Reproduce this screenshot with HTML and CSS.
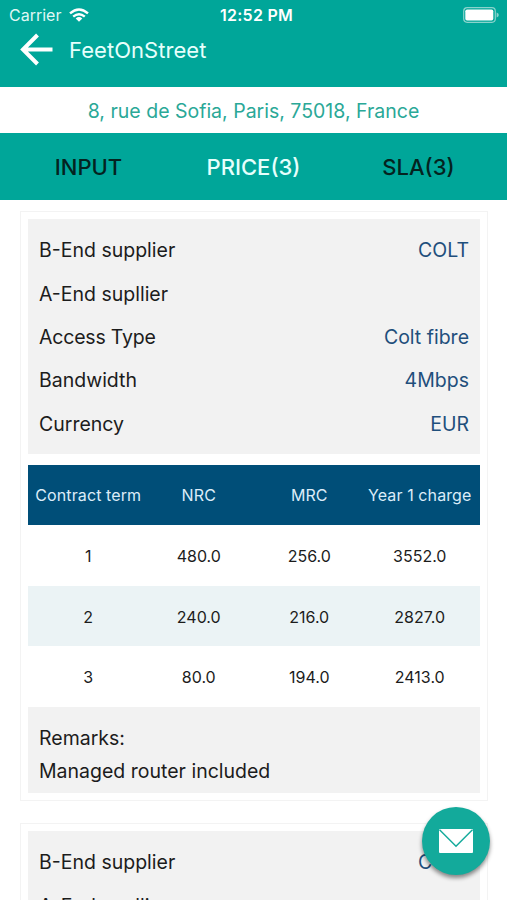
FILE: index.html
```html
<!DOCTYPE html>
<html lang="en">
<head>
<meta charset="utf-8">
<title>FeetOnStreet</title>
<link rel="stylesheet" href="styles.css">
</head>
<body>
<div class="screen">
  <header class="header">
    <div class="status">
      <div class="carrier"><span>Carrier</span>
        <svg class="wifi" viewBox="0 0 20 14" width="20" height="14"><g fill="none" stroke="#fff" stroke-width="2.4"><path d="M1 5.4Q10-2.4 19 5.4"/><path d="M4.2 8.7Q10 3.7 15.8 8.7"/></g><path d="M6.7 10.4Q10 7.6 13.3 10.4L10 13.7z" fill="#fff"/></svg>
      </div>
      <div class="clock">12:52 PM</div>
      <svg class="battery" viewBox="0 0 36 16" width="36" height="16"><rect x=".7" y=".7" width="31.6" height="14.6" rx="3.5" fill="none" stroke="#8ad3cc" stroke-width="1.2"/><rect x="2.3" y="2.5" width="28" height="11" rx="1.8" fill="#fff"/><path d="M33.6 5.5q2.2.6 2.2 2.5t-2.2 2.5z" fill="#8ad3cc"/></svg>
    </div>
    <div class="nav">
      <svg class="back" viewBox="0 0 34 34" width="34" height="34"><path d="M33.5 16.5H4M18.5 2L4 16.5 18.500 31" fill="none" stroke="#fff" stroke-width="4"/></svg>
      <h1 class="title">FeetOnStreet</h1>
    </div>
  </header>
  <div class="address"><span>8, rue de Sofia, Paris, 75018, France</span></div>
  <nav class="tabs">
    <span class="tab">INPUT</span><span class="tab active">PRICE(3)</span><span class="tab">SLA(3)</span>
  </nav>
  <main class="list">
    <section class="card">
      <dl class="info">
        <div class="row"><dt>B-End supplier</dt><dd>COLT</dd></div>
        <div class="row second"><dt>A-End supllier</dt><dd></dd></div>
        <div class="row"><dt class="tight">Access Type</dt><dd>Colt fibre</dd></div>
        <div class="row"><dt>Bandwidth</dt><dd>4Mbps</dd></div>
        <div class="row"><dt>Currency</dt><dd>EUR</dd></div>
      </dl>
      <div class="table">
        <div class="line head"><span>Contract term</span><span>NRC</span><span>MRC</span><span>Year 1 charge</span></div>
        <div class="line"><span>1</span><span>480.0</span><span>256.0</span><span>3552.0</span></div>
        <div class="line alt"><span>2</span><span>240.0</span><span>216.0</span><span>2827.0</span></div>
        <div class="line"><span>3</span><span>80.0</span><span>194.0</span><span>2413.0</span></div>
      </div>
      <div class="remarks"><p>Remarks:</p><p>Managed router included</p></div>
    </section>
    <section class="card">
      <dl class="info">
        <div class="row"><dt>B-End supplier</dt><dd>COLT</dd></div>
        <div class="row second"><dt>A-End supllier</dt><dd></dd></div>
      </dl>
    </section>
  </main>
  <div class="fab">
    <svg viewBox="0 0 34 24" width="34" height="24"><rect width="34" height="24" rx="1" fill="#fff"/><path d="M.5 .8L17 17.2 33.5.8" fill="none" stroke="#13aa9b" stroke-width="1.5"/></svg>
  </div>
</div>
</body>
</html>
```
FILE: styles.css
```css
* { box-sizing: border-box; margin: 0; padding: 0; }
body { font-family: Inter, "Liberation Sans", sans-serif; background: #fff; color: #1c1c1c; }
svg { display: block; }
.screen { position: relative; width: 507px; height: 900px; overflow: hidden; }
.header { height: 87px; background: #00a699; color: #fff; }
.status { display: grid; grid-template-columns: 1fr auto 1fr; align-items: center; height: 30px; padding: 0 8px 0 9px; }
.carrier { display: flex; align-items: center; gap: 8px; font-size: 16px; color: #dff7f4; }
.clock { font-size: 16px; font-weight: 600; padding-left: 5px; letter-spacing: .25px; }
.battery { justify-self: end; }
.nav { display: flex; align-items: center; height: 40px; padding-left: 19px; gap: 16px; }
.title { font-size: 22px; font-weight: 400; color: #e6fffc; letter-spacing: .05px; }
.address { display: flex; align-items: center; justify-content: center; height: 46px; padding-top: 1px; font-size: 19.5px; color: #2aa897; }
.tabs { display: grid; grid-template-columns: repeat(3, 1fr); align-items: center; height: 67px; padding: 0 6px; background: #00a699; text-align: center; font-size: 22px; font-weight: 500; color: #04231f; }
.active { color: #e6fffc; }
.list { display: flex; flex-direction: column; gap: 22px; padding: 11px 19px 0 20px; }
.card { flex: none; border: 1px solid #f3f3f3; padding: 7px; }
.info { height: 235px; padding: 9px 11px; background: #f2f2f2; font-size: 19.5px; }
.row { display: flex; justify-content: space-between; align-items: center; height: 43.5px; }
.row dd { color: #1f4f7c; }
.second { padding-top: 2px; }
.tight { letter-spacing: -.2px; }
.table { margin-top: 10px; padding-top: .5px; font-size: 16px; }
.line { display: grid; grid-template-columns: repeat(4, 1fr); align-items: center; height: 60.65px; padding: 1px 5px 0; text-align: center; white-space: nowrap; }
.head { background: #004e78; color: #dcecf8; letter-spacing: .1px; }
.alt { background: #ebf3f5; }
.remarks { height: 86px; padding: 15px 11px 0; background: #f2f2f2; font-size: 19.5px; line-height: 33px; }
.fab { position: absolute; left: 422px; top: 807px; width: 68px; height: 68px; border-radius: 50%; background: #13aa9b; display: flex; align-items: center; justify-content: center; box-shadow: 0 3px 4px rgba(0,0,0,.45); }
```
